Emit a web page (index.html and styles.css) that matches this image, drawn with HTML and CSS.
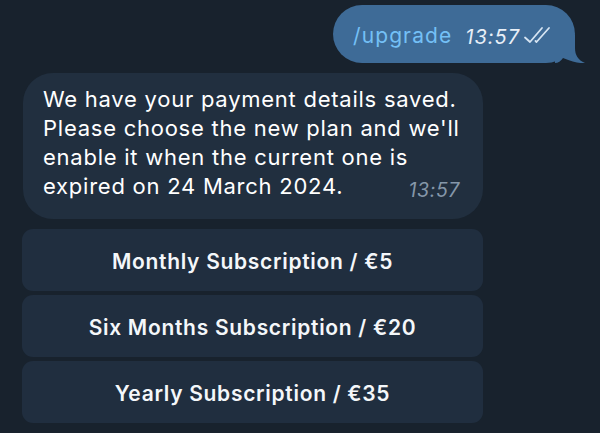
FILE: index.html
```html
<!DOCTYPE html>
<html>
<head>
<meta charset="utf-8">
<link rel="stylesheet" href="styles.css">
</head>
<body>
<div class="chat">
  <div class="row-out">
    <div class="bubble-out">
      <span class="cmd">/upgrade</span>
      <span class="meta-out">
        <span class="time-out">13:57</span>
        <svg class="checks" width="30" height="18" viewBox="0 0 30 18">
          <path d="M2 11.5 L7 16 L19 2" fill="none" stroke="#d6e4f2" stroke-width="1.8" stroke-linecap="round" stroke-linejoin="round"/>
          <path d="M12.5 15 L13.5 16 L26 2" fill="none" stroke="#d6e4f2" stroke-width="1.8" stroke-linecap="round" stroke-linejoin="round"/>
        </svg>
      </span>
      <svg class="tail" width="32" height="28" viewBox="0 0 32 28">
        <path d="M0 0 L20 0 L20 13 C20 20 23 25 30 28 C24 28.5 18 27 8 23 C6 26 3 28 0 28 Z" fill="#3e6b97"/>
      </svg>
    </div>
  </div>
  <div class="group-in">
    <div class="bubble-in">
      <p class="msg">We have your payment details saved.<br>Please choose the new plan and we'll<br>enable it when the current one is<br>expired on 24 March 2024.<span class="time-in">13:57</span></p>
    </div>
    <div class="keyboard">
      <div class="btn">Monthly Subscription / €5</div>
      <div class="btn">Six Months Subscription / €20</div>
      <div class="btn">Yearly Subscription / €35</div>
    </div>
  </div>
</div>
</body>
</html>
```

FILE: styles.css
```css
* { box-sizing: border-box; }
html, body {
  margin: 0;
  padding: 0;
  background: #18222d;
  width: 600px;
  height: 433px;
  overflow: hidden;
}
body {
  font-family: Inter, "Noto Sans", "Liberation Sans", sans-serif;
  color: #ffffff;
}
.chat {
  display: flex;
  flex-direction: column;
  padding-top: 5px;
}
.row-out {
  display: flex;
  justify-content: flex-end;
  padding-right: 25px;
}
.bubble-out {
  position: relative;
  height: 58px;
  width: 242px;
  background: #3e6b97;
  border-radius: 29px;
  display: flex;
  align-items: center;
  padding: 2px 0 0 20px;
}
.cmd {
  font-size: 21px;
  color: #74c0f6;
  letter-spacing: 1.1px;
}
.meta-out {
  display: flex;
  align-items: center;
  margin-left: 13px;
  padding-top: 3px;
}
.time-out {
  font-size: 20px;
  font-style: italic;
  color: #e8eff7;
  letter-spacing: 1px;
}
.checks {
  margin-left: 3px;
  margin-top: -3px;
}
.tail {
  position: absolute;
  right: -12px;
  bottom: 0;
}
.group-in {
  display: flex;
  flex-direction: column;
  margin-top: 10px;
  padding-left: 22px;
  width: 483px;
}
.bubble-in {
  margin-left: 1px;
  background: #212f3f;
  border-radius: 30px;
  height: 146px;
  padding: 12px 23px 0 20px;
}
.msg {
  margin: 0;
  font-size: 22px;
  line-height: 29px;
  letter-spacing: 0.75px;
  white-space: nowrap;
}
.time-in {
  float: right;
  font-size: 19.5px;
  font-style: italic;
  color: #8597a9;
  margin-top: 4px;
  letter-spacing: 0.6px;
}
.keyboard {
  display: flex;
  flex-direction: column;
  gap: 4px;
  margin-top: 10px;
}
.btn {
  height: 62px;
  background: #202e3f;
  border-radius: 11px;
  display: flex;
  align-items: center;
  justify-content: center;
  font-size: 21px;
  font-weight: 600;
  color: #f4f7fa;
  letter-spacing: 0.7px;
  padding-top: 3px;
}
```
